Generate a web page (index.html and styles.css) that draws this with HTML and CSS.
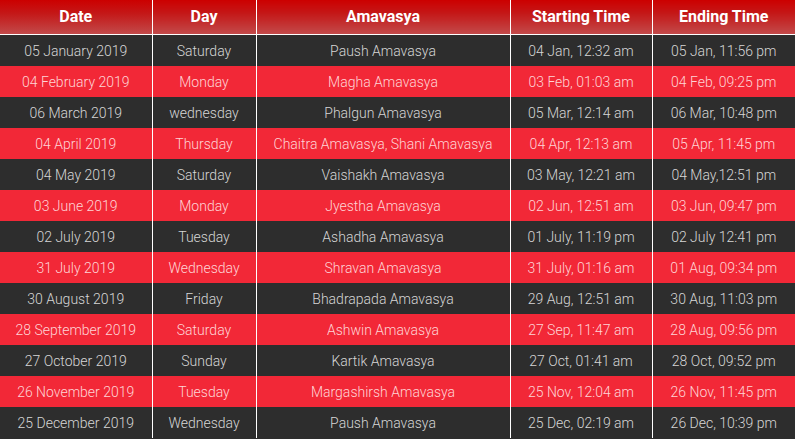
FILE: index.html
```html
<!DOCTYPE html>
<html>
<head>
<meta charset="utf-8">
<link rel="stylesheet" href="styles.css">
</head>
<body>
<table class="amv">
<colgroup>
<col class="c1"><col class="c2"><col class="c3"><col class="c4"><col class="c5">
</colgroup>
<thead>
<tr><th>Date</th><th>Day</th><th>Amavasya</th><th>Starting Time</th><th>Ending Time</th></tr>
</thead>
<tbody>
<tr><td>05 January 2019</td><td>Saturday</td><td>Paush Amavasya</td><td>04 Jan, 12:32 am</td><td>05 Jan, 11:56 pm</td></tr>
<tr><td>04 February 2019</td><td>Monday</td><td>Magha Amavasya</td><td>03 Feb, 01:03 am</td><td>04 Feb, 09:25 pm</td></tr>
<tr><td>06 March 2019</td><td>wednesday</td><td>Phalgun Amavasya</td><td>05 Mar, 12:14 am</td><td>06 Mar, 10:48 pm</td></tr>
<tr><td>04 April 2019</td><td>Thursday</td><td>Chaitra Amavasya, Shani Amavasya</td><td>04 Apr, 12:13 am</td><td>05 Apr, 11:45 pm</td></tr>
<tr><td>04 May 2019</td><td>Saturday</td><td>Vaishakh Amavasya</td><td>03 May, 12:21 am</td><td>04 May,12:51 pm</td></tr>
<tr><td>03 June 2019</td><td>Monday</td><td>Jyestha Amavasya</td><td>02 Jun, 12:51 am</td><td>03 Jun, 09:47 pm</td></tr>
<tr><td>02 July 2019</td><td>Tuesday</td><td>Ashadha Amavasya</td><td>01 July, 11:19 pm</td><td>02 July 12:41 pm</td></tr>
<tr><td>31 July 2019</td><td>Wednesday</td><td>Shravan Amavasya</td><td>31 July, 01:16 am</td><td>01 Aug, 09:34 pm</td></tr>
<tr><td>30 August 2019</td><td>Friday</td><td>Bhadrapada Amavasya</td><td>29 Aug, 12:51 am</td><td>30 Aug, 11:03 pm</td></tr>
<tr><td>28 September 2019</td><td>Saturday</td><td>Ashwin Amavasya</td><td>27 Sep, 11:47 am</td><td>28 Aug, 09:56 pm</td></tr>
<tr><td>27 October 2019</td><td>Sunday</td><td>Kartik Amavasya</td><td>27 Oct, 01:41 am</td><td>28 Oct, 09:52 pm</td></tr>
<tr><td>26 November 2019</td><td>Tuesday</td><td>Margashirsh Amavasya</td><td>25 Nov, 12:04 am</td><td>26 Nov, 11:45 pm</td></tr>
<tr><td>25 December 2019</td><td>Wednesday</td><td>Paush Amavasya</td><td>25 Dec, 02:19 am</td><td>26 Dec, 10:39 pm</td></tr>
</tbody>
</table>
</body>
</html>
```
FILE: styles.css
```css
html, body {
  margin: 0;
  padding: 0;
  background: #2d2d2d;
}
.amv {
  width: 795px;
  border-collapse: collapse;
  table-layout: fixed;
  font-family: Roboto, "Liberation Sans", sans-serif;
}
.c1 { width: 152px; }
.c2 { width: 104px; }
.c3 { width: 254px; }
.c4 { width: 142px; }
.c5 { width: 143px; }
.amv th {
  height: 32px;
  padding: 0 0 2px 0;
  font-size: 16px;
  font-weight: 700;
  color: #fff;
  background: linear-gradient(to bottom, #cc0000 0%, #c41818 40%, #c24a4a 100%);
  border-left: 1px solid #fff;
  border-bottom: 1px solid #fff;
  text-align: center;
  vertical-align: middle;
}
.amv td {
  height: 31px;
  padding: 0;
  font-size: 14px;
  font-weight: 300;
  text-align: center;
  vertical-align: middle;
  border-left: 1px solid #fff;
  white-space: nowrap;
}
.amv th:first-child, .amv td:first-child { border-left: none; }
.amv tbody tr:nth-child(odd) { background: #2d2d2d; color: #d6d6d6; }
.amv tbody tr:nth-child(even) { background: #f22837; color: #ffd4d6; }
```
